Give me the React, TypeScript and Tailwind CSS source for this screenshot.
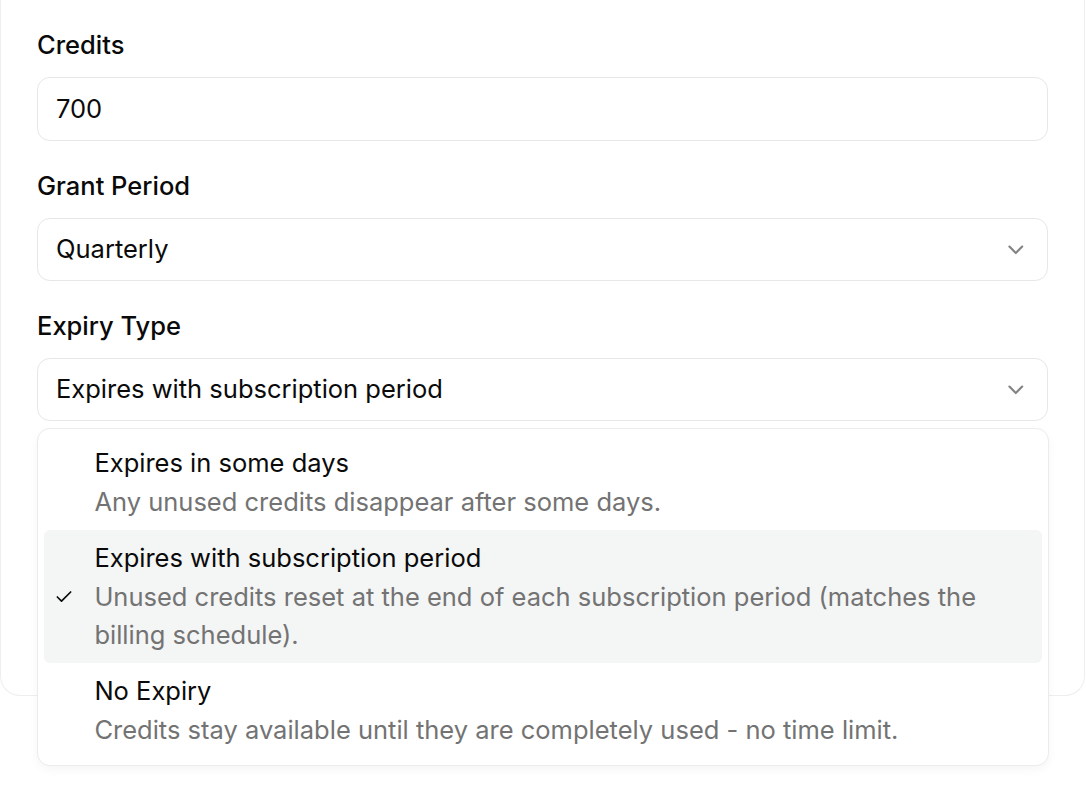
import { Check, ChevronDown } from 'lucide-react'

const options = [
  {
    value: 'days',
    title: 'Expires in some days',
    description: 'Any unused credits disappear after some days.',
  },
  {
    value: 'period',
    title: 'Expires with subscription period',
    description:
      'Unused credits reset at the end of each subscription period (matches the billing schedule).',
  },
  {
    value: 'never',
    title: 'No Expiry',
    description: 'Credits stay available until they are completely used - no time limit.',
  },
]

function FieldLabel({ children }: { children: React.ReactNode }) {
  return <div className="text-[25.5px] leading-[32px] font-medium text-[#0a0a0a]">{children}</div>
}

function SelectTrigger({ value }: { value: string }) {
  return (
    <div className="mt-[16px] flex h-[63px] items-center justify-between rounded-[12.8px] border border-[#e7e7e7] bg-white pl-[18px] pr-[18px] text-[25.5px] text-[#0a0a0a]">
      <span>{value}</span>
      <ChevronDown className="h-[25.6px] w-[25.6px] text-[#0a0a0a] opacity-50" strokeWidth={2} />
    </div>
  )
}

export default function App() {
  const selected = 'period'

  return (
    <div className="min-h-screen bg-white font-['Inter',sans-serif]">
      <div className="relative h-[696px] w-[1085px] rounded-b-[20px] border border-t-0 border-[#eeeeee] px-[36px] pt-[29px]">
        <FieldLabel>Credits</FieldLabel>
        <div className="mt-[16px] flex h-[64px] items-center rounded-[12.8px] border border-[#e7e7e7] bg-white pl-[18px] text-[25.5px] text-[#0a0a0a]">
          700
        </div>

        <div className="mt-[29px]">
          <FieldLabel>Grant Period</FieldLabel>
          <SelectTrigger value="Quarterly" />
        </div>

        <div className="mt-[29px]">
          <FieldLabel>Expiry Type</FieldLabel>
          <SelectTrigger value="Expires with subscription period" />
        </div>

        <div className="absolute left-[36px] top-[428px] w-[1012px] rounded-[12.8px] border border-[#ebebeb] bg-white p-[6.4px] shadow-[0_4px_10px_rgba(0,0,0,0.04)]">
          {options.map((o) => (
            <div
              key={o.value}
              className={`relative rounded-[6px] py-[9px] pl-[50px] pr-[13px] text-[25.5px] leading-[38.4px] ${
                o.value === selected ? 'bg-[#f4f5f5]' : ''
              }`}
            >
              {o.value === selected && (
                <span className="absolute left-[9px] top-1/2 flex h-[22px] w-[22px] -translate-y-1/2 items-center justify-center">
                  <Check className="h-[20px] w-[20px] text-[#0a0a0a]" strokeWidth={2} />
                </span>
              )}
              <div className="text-[#0a0a0a]">{o.title}</div>
              <div className="text-[#737373]">{o.description}</div>
            </div>
          ))}
        </div>
      </div>
    </div>
  )
}
